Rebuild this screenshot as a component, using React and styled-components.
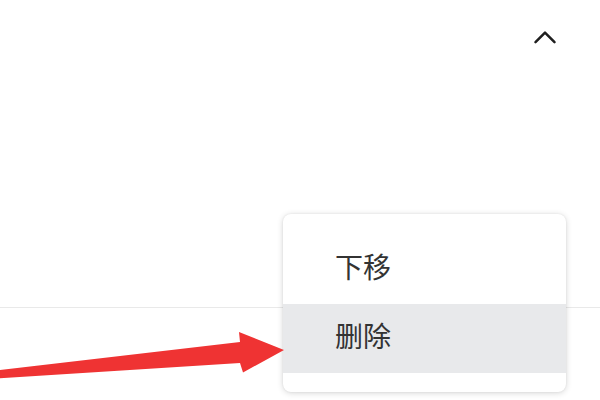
import React from "react";
import styled, { createGlobalStyle } from "styled-components";

const GlobalStyle = createGlobalStyle`
  html, body {
    margin: 0;
    padding: 0;
    background: #ffffff;
  }
  body {
    font-family: "Noto Sans CJK SC", "Noto Sans", sans-serif;
  }
`;

function ChevronUp() {
  return (
    <svg width="24" height="24" viewBox="0 0 24 24" fill="none">
      <path
        d="M2.5 16.2 L12 6.7 L21.5 16.2"
        stroke="#1f1f1f"
        strokeWidth="2.5"
        strokeLinecap="round"
        strokeLinejoin="round"
      />
    </svg>
  );
}

function Arrow() {
  return (
    <ArrowLayer viewBox="0 0 600 400">
      <polygon
        points="-4,370.5 240,342 239,332 284,350 243,372.5 240,363 -4,378.5"
        fill="#ef3333"
        strokeLinejoin="round"
      />
    </ArrowLayer>
  );
}

const items = [
  { label: "下移", active: false },
  { label: "删除", active: true },
];

export default function App() {
  return (
    <>
      <GlobalStyle />
      <Page>
        <Panel>
          <Header>
            <ToggleButton aria-label="收起">
              <ChevronUp />
            </ToggleButton>
          </Header>
        </Panel>
        <Menu>
          {items.map((item) => (
            <MenuItem key={item.label} $active={item.active}>
              {item.label}
            </MenuItem>
          ))}
        </Menu>
        <Arrow />
      </Page>
    </>
  );
}

const Page = styled.div`
  position: relative;
  width: 600px;
  height: 400px;
  overflow: hidden;
  background: #ffffff;
`;

const Panel = styled.div`
  height: 308px;
  border-bottom: 1px solid #e9e9e9;
  box-sizing: border-box;
`;

const Header = styled.div`
  display: flex;
  justify-content: flex-end;
  padding: 26px 43px 0 0;
`;

const ToggleButton = styled.button`
  display: flex;
  align-items: center;
  justify-content: center;
  width: 24px;
  height: 24px;
  padding: 0;
  border: none;
  background: transparent;
  cursor: pointer;
`;

const Menu = styled.ul`
  position: absolute;
  left: 283px;
  top: 214px;
  width: 283px;
  margin: 0;
  padding: 21px 0 19px;
  list-style: none;
  background: #ffffff;
  border-radius: 8px;
  box-shadow: 0 1px 6px rgba(0, 0, 0, 0.16), 0 0 2px rgba(0, 0, 0, 0.08);
`;

const MenuItem = styled.li`
  display: flex;
  align-items: center;
  box-sizing: border-box;
  height: 69px;
  padding: 0 0 7px 52px;
  font-size: 28px;
  color: #333333;
  background: ${(p) => (p.$active ? "#e8e9eb" : "transparent")};
`;

const ArrowLayer = styled.svg`
  position: absolute;
  left: 0;
  top: 0;
  width: 600px;
  height: 400px;
  pointer-events: none;
`;
